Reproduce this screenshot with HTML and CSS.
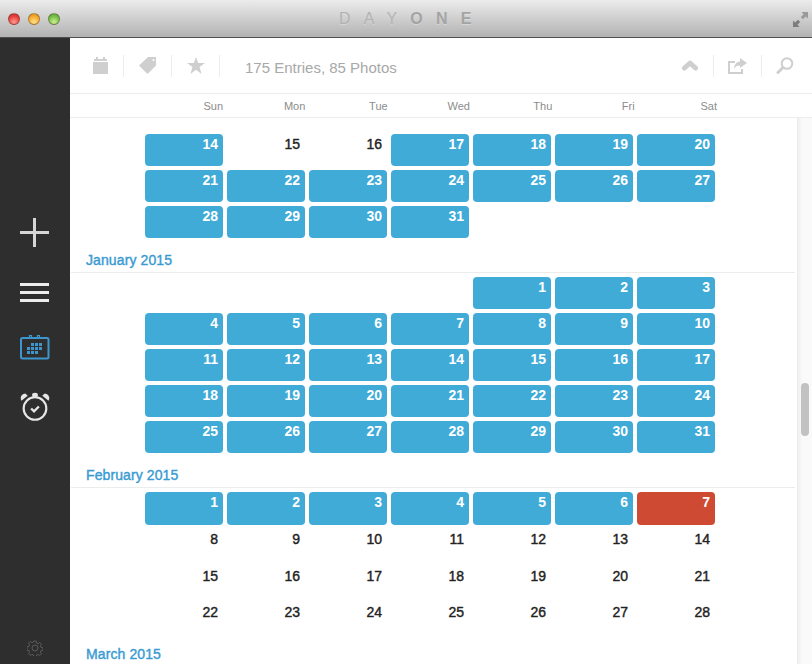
FILE: index.html
```html
<!DOCTYPE html>
<html lang="en">
<head>
<meta charset="utf-8">
<title>Day One</title>
<link rel="stylesheet" href="styles.css">
</head>
<body>
<div class="window">
  <header class="titlebar">
    <div class="lights"><span class="light red"></span><span class="light yellow"></span><span class="light green"></span></div>
    <div class="title"><span>DAY</span><b>ONE</b></div>
    <svg class="expand" width="15" height="15" viewBox="0 0 16 16"><path d="M9 0h7v7l-2.300-2.300-3 3-2.400-2.400 3-3z" fill="#9a9a9a"/><path d="M7 16H0V9l2.300 2.300 3-3 2.400 2.400-3 3z" fill="#7d7d7d"/></svg>
  </header>
  <div class="body">
    <nav class="sidebar">
      <svg class="side-icon plus" width="30" height="30" viewBox="0 0 30 30"><path d="M14.500 0v29M0 14.500h29" stroke="#d6d6d6" stroke-width="3" fill="none"/></svg>
      <svg class="side-icon menu" width="30" height="19" viewBox="0 0 30 19"><path d="M0 1.500h29M0 9.500h29M0 17.500h29" stroke="#ececec" stroke-width="3" fill="none"/></svg>
      <svg class="side-icon cal" width="30" height="25" viewBox="0 0 30 25"><rect x="1" y="3" width="27.500" height="20.500" rx="1.500" fill="none" stroke="#3d97cc" stroke-width="2"/><path d="M9.500 3V.5h2V3M17.500 3V.5h2V3" stroke="#3d97cc" stroke-width="1.200" fill="none"/><path d="M11 8h3v3h-3zM15 8h3v3h-3zM19 8h3v3h-3zM7 12h3v3H7zM11 12h3v3h-3zM15 12h3v3h-3zM19 12h3v3h-3zM7 16h3v3H7zM11 16h3v3h-3zM15 16h3v3h-3z" fill="#3d97cc"/></svg>
      <svg class="side-icon alarm" width="30" height="30" viewBox="0 0 31 30"><circle cx="15.500" cy="16.500" r="11.700" fill="none" stroke="#e6e6e6" stroke-width="2.200"/><path d="M1.500 8.500C-.5 5 1.500 1.500 5.500 1L8 3.500zM29.500 8.500C31.500 5 29.500 1.500 25.500 1L23 3.500z" fill="#e6e6e6"/><ellipse cx="15.500" cy="2.500" rx="3" ry="2.300" fill="#e6e6e6"/><path d="M11.500 16.500l3 3 5-5" fill="none" stroke="#e6e6e6" stroke-width="2.400"/></svg>
      <svg class="gear" width="16" height="16" viewBox="0 0 16 16"><path d="M6.800 1h2.400l.4 2 1.500.6 1.700-1.100 1.700 1.700-1.100 1.700.6 1.500 2 .4v2.400l-2 .4-.6 1.500 1.100 1.700-1.700 1.700-1.700-1.100-1.500.6-.4 2H6.800l-.4-2-1.500-.6-1.700 1.100-1.700-1.700 1.100-1.700-.6-1.500-2-.4V6.800l2-.4.6-1.500-1.100-1.700 1.700-1.700 1.700 1.100 1.500-.6z" fill="none" stroke="#5c5c5c"/><circle cx="8" cy="8" r="3" fill="none" stroke="#5c5c5c"/></svg>
    </nav>
    <main class="main">
      <div class="toolbar">
        <span class="tool first"><svg width="15" height="17" viewBox="0 0 15 17"><path d="M1 4V2h2V0h2v2h5V0h2v2h2v2zM0 5h15v12H0z" fill="#cfcfcf"/></svg></span>
        <span class="tool"><svg width="18" height="17" viewBox="0 0 18 17"><path d="M0 8.500 9 0h8v8.500L8.500 17zM14.500 2a1 1 0 1 0 .01 0z" fill="#cfcfcf" fill-rule="evenodd"/></svg></span>
        <span class="tool"><svg width="18" height="17" viewBox="0 0 18 17"><path d="m9 0 2.200 6H18l-5.500 4 2.100 7L9 12.800 3.400 17l2.100-7L0 6h6.800z" fill="#cfcfcf"/></svg></span>
        <span class="count">175 Entries, 85 Photos</span>
        <span class="tool-right chev"><svg width="16" height="11" viewBox="0 0 16 11"><path d="M2.500 8 8 3l5.500 5" fill="none" stroke="#cfcfcf" stroke-width="5" stroke-linecap="round" stroke-linejoin="round"/></svg></span>
        <span class="tool-right ruled"><svg width="19" height="16" viewBox="0 0 19 16"><path d="M0 3h7v2H2v9h11v-3h2v5H0z" fill="#cfcfcf"/><path d="M12 0l7 5-7 5V7.500c-3 0-5 1-6 3.500 0-4 2-7 6-7.500z" fill="#cfcfcf"/></svg></span>
        <span class="tool-right ruled find"><svg width="18" height="18" viewBox="0 0 18 18"><circle cx="11" cy="6.500" r="5.300" fill="none" stroke="#cfcfcf" stroke-width="2"/><path d="M6.500 11 2 15.500" stroke="#cfcfcf" stroke-width="3" stroke-linecap="round"/></svg></span>
      </div>
      <div class="weekdays">
        <span>Sun</span><span>Mon</span><span>Tue</span><span>Wed</span><span>Thu</span><span>Fri</span><span>Sat</span>
      </div>
      <div class="scroller">
        <section class="month top">
          <div class="grid">
            <div class="d on">14</div><div class="d">15</div><div class="d">16</div><div class="d on">17</div><div class="d on">18</div><div class="d on">19</div><div class="d on">20</div>
            <div class="d on">21</div><div class="d on">22</div><div class="d on">23</div><div class="d on">24</div><div class="d on">25</div><div class="d on">26</div><div class="d on">27</div>
            <div class="d on">28</div><div class="d on">29</div><div class="d on">30</div><div class="d on">31</div>
          </div>
        </section>
        <section class="month">
          <h2>January 2015</h2>
          <div class="grid">
            <div class="d x"></div><div class="d x"></div><div class="d x"></div><div class="d x"></div><div class="d on">1</div><div class="d on">2</div><div class="d on">3</div>
            <div class="d on">4</div><div class="d on">5</div><div class="d on">6</div><div class="d on">7</div><div class="d on">8</div><div class="d on">9</div><div class="d on">10</div>
            <div class="d on">11</div><div class="d on">12</div><div class="d on">13</div><div class="d on">14</div><div class="d on">15</div><div class="d on">16</div><div class="d on">17</div>
            <div class="d on">18</div><div class="d on">19</div><div class="d on">20</div><div class="d on">21</div><div class="d on">22</div><div class="d on">23</div><div class="d on">24</div>
            <div class="d on">25</div><div class="d on">26</div><div class="d on">27</div><div class="d on">28</div><div class="d on">29</div><div class="d on">30</div><div class="d on">31</div>
          </div>
        </section>
        <section class="month">
          <h2>February 2015</h2>
          <div class="grid feb">
            <div class="d on">1</div><div class="d on">2</div><div class="d on">3</div><div class="d on">4</div><div class="d on">5</div><div class="d on">6</div><div class="d today">7</div>
            <div class="d">8</div><div class="d">9</div><div class="d">10</div><div class="d">11</div><div class="d">12</div><div class="d">13</div><div class="d">14</div>
            <div class="d">15</div><div class="d">16</div><div class="d">17</div><div class="d">18</div><div class="d">19</div><div class="d">20</div><div class="d">21</div>
            <div class="d">22</div><div class="d">23</div><div class="d">24</div><div class="d">25</div><div class="d">26</div><div class="d">27</div><div class="d">28</div>
          </div>
        </section>
        <section class="month">
          <h2>March 2015</h2>
        </section>
        <div class="scrollbar"><div class="thumb"></div></div>
      </div>
    </main>
  </div>
</div>
</body>
</html>
```

FILE: styles.css
```css
* { box-sizing: border-box; }
html, body { margin: 0; height: 100%; overflow: hidden; background: #fff; }
body { font-family: "Liberation Sans", Arial, sans-serif; }
.window { width: 812px; height: 664px; display: flex; flex-direction: column; overflow: hidden; }

.titlebar { height: 38px; flex: none; display: flex; align-items: center; position: relative; padding: 1px 0 0 8px;
  background: linear-gradient(#ececec 0, #dcdcdc 10px, #b2b2b2 37px); border-bottom: 1px solid #4f4f4f; }
.lights { display: flex; gap: 8px; }
.light { width: 12px; height: 12px; border-radius: 50%; border: 1px solid rgba(90,60,60,.45); }
.red { background: radial-gradient(circle at 50% 80%, #ff9a90, #e8403c 60%, #b82a2a); }
.yellow { background: radial-gradient(circle at 50% 80%, #ffe088, #f5aa2c 60%, #cc8a1c); }
.green { background: radial-gradient(circle at 50% 80%, #c8f090, #78bf48 60%, #549a34); }
.title { position: absolute; left: 339px; top: 10px; font-size: 16px; line-height: 18px; letter-spacing: 13.2px; color: #b2b2b2; white-space: nowrap; text-shadow: 0 1px 0 rgba(255,255,255,.3); }
.title b { color: #a4a4a4; }
.expand { position: absolute; right: 4px; top: 12px; }

.body { flex: 1; display: flex; min-height: 0; }
.sidebar { width: 70px; flex: none; background: #2e2e2e; display: flex; flex-direction: column; align-items: center; padding-top: 180px; }
.side-icon { display: block; flex: none; }
.menu { margin-top: 35px; }
.cal { margin-top: 33px; }
.alarm { margin-top: 32px; }
.gear { margin-top: auto; margin-bottom: 8px; }

.main { flex: 1; min-width: 0; display: flex; flex-direction: column; }
.toolbar { height: 56px; flex: none; display: flex; align-items: center; border-bottom: 1px solid #ececec; padding: 0 18px 0 23px; }
.tool { width: 48px; height: 22px; display: flex; align-items: center; justify-content: center; border-right: 1px solid #ececec; }
.tool.first { width: 31px; justify-content: flex-start; }
.count { margin-left: 25px; padding-top: 3px; font-size: 15px; color: #a8a8a8; flex: 1; }
.tool-right { height: 22px; display: flex; align-items: center; justify-content: center; }
.chev { margin-right: 15px; }
.tool-right.ruled { border-left: 1px solid #ececec; width: 48px; }
.tool-right.find { width: 33px; justify-content: flex-end; }

.weekdays { height: 24px; flex: none; display: grid; grid-template-columns: repeat(7, 78px); column-gap: 4.33px; padding-left: 75px; border-bottom: 1px solid #ececec; font-size: 11px; line-height: 24px; color: #8c8c8c; text-align: right; }

.scroller { flex: 1; min-height: 0; position: relative; overflow: hidden; padding-right: 17px; }
.month h2 { margin: 0 0 0 1px; height: 35px; padding: 14px 0 0 15px; font-size: 14px; line-height: 16px; letter-spacing: .1px; font-weight: normal; -webkit-text-stroke: .4px #3a9bd2; color: #3a9bd2; border-bottom: 1px solid #ececec; }
.grid { display: grid; grid-template-columns: repeat(7, 78px); grid-auto-rows: 32px; gap: 4px; padding: 4px 0 0 75px; }
.grid.feb { grid-template-rows: 33px 33px 32px 30px; }
.month.top .grid { padding-top: 16px; }
.d { text-align: right; padding-right: 5px; font-size: 14px; line-height: 20px; color: #222; -webkit-text-stroke: .4px #222; border-radius: 4px; }
.d.on, .d.today { color: #fff; font-weight: bold; -webkit-text-stroke: 0; }
.d.on { background: #41abd8; }
.d.today { background: #cf4a32; }

.scrollbar { position: absolute; right: 0; top: 0; bottom: 0; width: 15px; background: linear-gradient(90deg, #f0f0f0, #fafafa 30%, #fafafa); border-left: 1px solid #ececec; }
.thumb { position: absolute; left: 3px; top: 265px; width: 8px; height: 53px; border-radius: 4px; background: #c2c2c2; }
```
